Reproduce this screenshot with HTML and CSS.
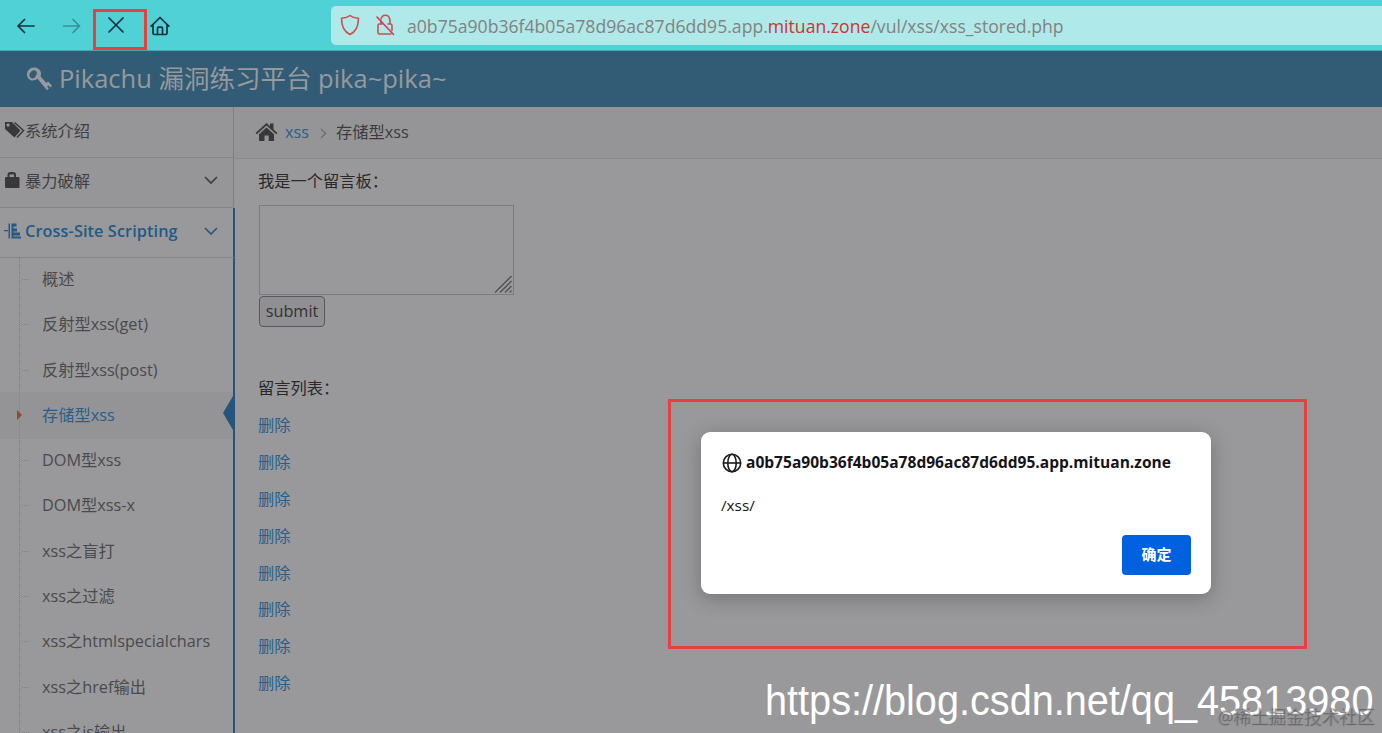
FILE: index.html
```html
<!DOCTYPE html>
<html lang="zh">
<head>
    <meta charset="UTF-8">
    <meta name="viewport" content="width=device-width, initial-scale=1.0">
    <title>Pikachu 漏洞练习平台</title>
    <link rel="stylesheet" href="styles.css">
</head>
<body>
    <div class="toolbar">
        <div class="nav-buttons">
            <svg class="back" width="20" height="20" viewBox="0 0 20 20"><path d="M18 10H2M8.500 3.500L2 10l6.500 6.500"/></svg>
            <svg class="forward" width="20" height="20" viewBox="0 0 20 20"><path d="M1.500 10h16M11 3.500l6.500 6.500-6.500 6.500"/></svg>
            <span class="stop"><svg width="20" height="20" viewBox="0 0 20 20"><path d="M3 3l14 14M17 3L3 17"/></svg></span>
            <svg class="home" width="20" height="20" viewBox="0 0 20 20"><path d="M1.200 10.200L10 1.500l8.800 8.700M3 9v8.200q0 1.300 1.300 1.300h11.400q1.300 0 1.300-1.300V9M7.500 18v-5.500q0-1.300 1.300-1.300h2.400q1.300 0 1.300 1.300V18"/></svg>
        </div>
        <div class="url-bar">
            <svg width="20" height="22" viewBox="0 0 20 22"><path d="M10 1.500C7.500 3.500 4.500 4 1.500 4.300C1.500 11 3.500 17.500 10 20.500C16.500 17.500 18.500 11 18.500 4.300C15.500 4 12.500 3.500 10 1.500Z"/></svg>
            <svg class="lock" width="20" height="22" viewBox="0 0 20 22"><path d="M6 5q1-3.800 4.500-3.800T15 6v4M6 7v3M13 10h2.500q1.500 0 1.500 1.500v5M16 20H4.500Q3 20 3 18.500v-7Q3 10 4.500 10H7"/><path class="slash" d="M2 3l16.500 17.500"/></svg>
            <span class="url">a0b75a90b36f4b05a78d96ac87d6dd95.app.<b>mituan.zone</b>/vul/xss/xss_stored.php</span>
        </div>
    </div>

    <header>
        <svg width="26" height="26" viewBox="0 0 26 26"><path fill-rule="evenodd" d="M8 1.500C4 1.500 1 4.500 1 8.500c0 3.500 2.500 6 5.500 6 2 0 3.700-.5 5-1.700L21 24.200l1.800-1.600-1.700-2 1.300-1.200 1.800 2 1.800-1.700-3.800-4.300-1.800 1.500-5.800-6.300c.3-1 .4-2 .4-3C15 4 12 1.500 8 1.500zM8.200 4.300a3 3 0 0 1 1.700 5.200A3.300 3.300 0 1 1 4.600 6.500 4 4 0 0 1 8.200 4.300z"/></svg>
        <span>Pikachu 漏洞练习平台 pika~pika~</span>
    </header>

    <div class="main">
        <nav class="sidebar">
            <a class="item first" href="#">
                <svg width="21" height="18" viewBox="0 0 21 18"><path fill-rule="evenodd" d="M1 1h7l8.500 8.500-6 7L1 8zM4 2.500a1.600 1.600 0 1 0 .1 0z"/><path class="stroke" d="M10.500 1.500l9 8-6.500 7"/></svg>
                <span>系统介绍</span>
            </a>
            <a class="item" href="#">
                <svg width="21" height="18" viewBox="0 0 21 18"><path fill-rule="evenodd" d="M1 7q0-1 1-1h1.500V4q0-3 3-3H9q3 0 3 3v2h2.500q1 0 1 1v9q0 1-1 1H2q-1 0-1-1zM5.500 6H10V3.500H5.500z"/></svg>
                <span>暴力破解</span>
                <svg class="arrow" width="14" height="10" viewBox="0 0 14 10"><path d="M1 2l6 6 6-6"/></svg>
            </a>
            <a class="item open" href="#">
                <svg width="21" height="18" viewBox="0 0 21 18"><path d="M0 8h4v1.300H0zM4.500 1.500H6v15H4.500zM7.500 1.500h5v3H9.500v2H13v3H9.500v1H16v3H9.500v1H17v2H7.500z"/></svg>
                <span>Cross-Site Scripting</span>
                <svg class="arrow" width="14" height="10" viewBox="0 0 14 10"><path d="M1 2l6 6 6-6"/></svg>
            </a>
            <ul class="submenu">
                <li>概述</li>
                <li>反射型xss(get)</li>
                <li>反射型xss(post)</li>
                <li class="active">存储型xss</li>
                <li>DOM型xss</li>
                <li>DOM型xss-x</li>
                <li>xss之盲打</li>
                <li>xss之过滤</li>
                <li>xss之htmlspecialchars</li>
                <li>xss之href输出</li>
                <li>xss之js输出</li>
            </ul>
        </nav>

        <div class="content">
            <div class="breadcrumb">
                <svg width="23" height="20" viewBox="0 0 23 20"><path d="M11.500 1L15 4.200V1.500h3.500v6L22.500 11l-1.300 1.300-9.700-8.700-9.700 8.700L.5 11z"/><path d="M11.500 5.500l7.500 6.800V19h-5.300v-5.500H9.500V19H4v-6.700z"/></svg>
                <a href="#">xss</a>
                <svg class="sep" width="7" height="11" viewBox="0 0 7 11"><path d="M1 1l4.500 4.500L1 10"/></svg>
                <span>存储型xss</span>
            </div>
            <div class="board">
                <p class="label">我是一个留言板：</p>
                <div class="textarea">
                    <svg width="18" height="18" viewBox="0 0 18 18"><path d="M1 17.500L17.500 1M6 17.500L17.500 6M11 17.500l6.500-6.500M15.500 17.500l2-2"/></svg>
                </div>
                <button class="submit">submit</button>
                <p class="label list-title">留言列表：</p>
                <div class="messages">
                    <a href="#">删除</a>
                    <a href="#">删除</a>
                    <a href="#">删除</a>
                    <a href="#">删除</a>
                    <a href="#">删除</a>
                    <a href="#">删除</a>
                    <a href="#">删除</a>
                    <a href="#">删除</a>
                </div>
            </div>
        </div>
    </div>

    <!-- alert dialog -->
    <div class="highlight">
        <div class="dialog">
            <div class="dialog-title">
                <svg width="20" height="20" viewBox="0 0 20 20"><circle cx="10" cy="10" r="8.700"/><ellipse cx="10" cy="10" rx="4.200" ry="8.700"/><path d="M1.300 10h17.400"/></svg>
                <span>a0b75a90b36f4b05a78d96ac87d6dd95.app.mituan.zone</span>
            </div>
            <p>/xss/</p>
            <button>确定</button>
        </div>
    </div>

    <div class="blog-url">https://blog.csdn.net/qq_45813980</div>
    <div class="community">@稀土掘金技术社区</div>
</body>
</html>
```
FILE: styles.css
```css
* {
    box-sizing: border-box;
}
body {
    margin: 0;
    height: 733px;
    overflow: hidden;
    position: relative;
    font-family: "Open Sans", "Noto Sans CJK SC", sans-serif;
    font-size: 16.25px;
    color: #3b3b3e;
    background-color: #99999b;
}
a {
    color: #285f8a;
    text-decoration: none;
}
svg {
    flex: none;
}

/* browser bar */
.toolbar {
    height: 51px;
    display: flex;
    align-items: center;
    background-color: #50d1d5;
    border-bottom: 1px solid #4ba5b1;
}
.nav-buttons {
    width: 331px;
    flex: none;
    display: flex;
    align-items: center;
    padding: 1px 0 0 16px;
}
.nav-buttons svg {
    fill: none;
    stroke: #14303f;
    stroke-width: 1.7;
    stroke-linecap: round;
    stroke-linejoin: round;
}
.nav-buttons .forward {
    margin-left: 26px;
    opacity: 0.4;
}
.stop {
    width: 54px;
    height: 41px;
    margin: 7px 3px 0 11px;
    padding: 7px 0 0 10px;
    border: 3px solid #e8403f;
}
.stop svg {
    display: block;
    margin-top: -4px;
}
.url-bar {
    flex: 1;
    height: 39px;
    display: flex;
    align-items: center;
    padding-left: 9px;
    background-color: #afe9ea;
    border-radius: 5px 0 0 5px;
}
.url-bar svg {
    fill: none;
    stroke: #c8524a;
    stroke-width: 1.6;
    stroke-linecap: round;
    stroke-linejoin: round;
}
.url-bar .lock {
    margin-left: 15px;
}
.url-bar .slash {
    stroke: #e03358;
}
.url {
    margin-left: 12px;
    font-size: 17.62px;
    line-height: 24px;
    padding-top: 1px;
    color: #85827f;
    white-space: nowrap;
}
.url b {
    font-weight: normal;
    color: #d0342a;
}

header {
    height: 56px;
    display: flex;
    align-items: center;
    padding-left: 26px;
    gap: 8px;
    font-size: 25.5px;
    color: #97999c;
    background-color: #325c76;
}
header svg {
    fill: #97999c;
}
header span {
    margin: -5px 0 0 -1px;
    white-space: nowrap;
}

.main {
    height: 626px;
    display: flex;
}

/* left menu */
.sidebar {
    width: 235px;
    flex: none;
    background: linear-gradient(#7f7f82, #7f7f82) 233px 0 / 1px 100px no-repeat #969698;
    overflow: hidden;
}
.item {
    height: 50px;
    margin-right: 2px;
    display: flex;
    align-items: center;
    padding: 0 15px 5px 4px;
    color: #3f3f42;
    border-bottom: 1px solid #858587;
}
.item.first {
    height: 51px;
    padding-bottom: 4px;
}
.item svg {
    fill: #38383a;
}
.item .stroke {
    fill: none;
    stroke: #38383a;
    stroke-width: 1.5;
}
.item .arrow {
    margin-left: auto;
    fill: none;
    stroke: #3f3f42;
    stroke-width: 1.7;
}
.item.open {
    margin-right: 0;
    padding-bottom: 4px;
    font-weight: 600;
    letter-spacing: 0.1px;
    color: #235985;
    background-color: #99999b;
    border-right: 2px solid #25557d;
}
.item.open svg {
    fill: #235985;
}
.item.open .arrow {
    fill: none;
    stroke: #235985;
}
.submenu {
    height: 476px;
    margin: 0;
    padding: 0;
    list-style: none;
    background: repeating-linear-gradient(#7b7b7e 0 1px, transparent 1px 2px) 19px 0 / 1px 100% no-repeat #99999b;
    border-right: 2px solid #25557d;
}
.submenu li {
    position: relative;
    height: 45.3px;
    padding-left: 42px;
    line-height: 42.6px;
    color: #4a4a4d;
    white-space: nowrap;
}
.submenu li::before {
    content: "";
    position: absolute;
    left: 22px;
    top: 21px;
    width: 7px;
    border-top: 1px dotted #808083;
}
.submenu li.active {
    color: #285f8a;
    background-color: rgba(140, 140, 146, 0.4);
    box-shadow: 0 -2px rgba(140, 140, 146, 0.4);
}
.submenu li.active::before {
    left: 17px;
    top: 16px;
    width: 0;
    border: solid transparent;
    border-width: 5px 0 5px 5px;
    border-left-color: #94492c;
}
.submenu li.active::after {
    content: "";
    position: absolute;
    right: 0;
    top: 2px;
    border: solid transparent;
    border-width: 17px 10px 17px 0;
    border-right-color: #25557d;
}

/* page content */
.content {
    flex: 1;
}
.breadcrumb {
    height: 52px;
    display: flex;
    align-items: center;
    padding: 0 0 2px 20px;
    background-color: #959597;
    border-bottom: 1px solid #87878a;
}
.breadcrumb svg {
    fill: #38383a;
}
.breadcrumb a {
    margin-left: 7px;
}
.breadcrumb span {
    margin-top: -1px;
}
.breadcrumb .sep {
    margin: 3px 9px 0 11px;
    fill: none;
    stroke: #6d6d70;
    stroke-width: 1.4;
}
.board {
    padding: 10px 0 0 24px;
    display: flex;
    flex-direction: column;
    align-items: flex-start;
}
.label {
    margin: 0 0 0 -1px;
    height: 24px;
    line-height: 24px;
    color: #29292b;
}
.textarea {
    width: 255px;
    height: 90px;
    margin-top: 12px;
    display: flex;
    justify-content: flex-end;
    align-items: flex-end;
    padding: 0 1px 1px 0;
    border: 1px solid #7c7c7f;
}
.textarea svg {
    stroke: #515154;
    stroke-width: 1.3;
}
.submit {
    width: 66px;
    height: 31px;
    margin-top: 1px;
    padding: 0 0 2px;
    font: inherit;
    color: #333335;
    background-color: #8f8f94;
    border: 1px solid #59595c;
    border-radius: 4px;
}
.list-title {
    margin-top: 49px;
}
.messages {
    margin: 7px 0 0 -1px;
    display: flex;
    flex-direction: column;
}
.messages a {
    height: 36.9px;
    line-height: 36px;
}

/* dialog */
.highlight {
    position: absolute;
    left: 668px;
    top: 399px;
    width: 639px;
    height: 250px;
    padding: 30px;
    border: 3px solid #e8403f;
}
.dialog {
    width: 510px;
    height: 162px;
    display: flex;
    flex-direction: column;
    padding: 20px;
    font-size: 15.3px;
    color: #15141a;
    background-color: #fff;
    border-radius: 9px;
    box-shadow: 0 4px 20px rgba(30, 30, 35, 0.3);
}
.dialog-title {
    height: 22px;
    display: flex;
    align-items: center;
    gap: 4px;
    font-size: 15.55px;
    font-weight: bold;
    white-space: nowrap;
}
.dialog-title span {
    margin-top: -2px;
}
.dialog-title svg {
    margin-left: 1px;
    fill: none;
    stroke: #1c1b20;
    stroke-width: 1.6;
}
.dialog p {
    margin: 20px 0 0;
    line-height: 22px;
}
.dialog button {
    width: 69px;
    height: 40px;
    margin-top: auto;
    margin-bottom: -1px;
    align-self: flex-end;
    padding: 0 0 3px;
    font-family: inherit;
    font-size: 15px;
    font-weight: bold;
    color: #fff;
    background-color: #0061e0;
    border: none;
    border-radius: 4px;
}

.blog-url {
    position: absolute;
    left: 765px;
    top: 677px;
    font-family: "Liberation Sans", sans-serif;
    font-size: 42px;
    line-height: 48px;
    color: #fff;
    white-space: nowrap;
    transform: scaleX(0.944);
    transform-origin: left;
}
.community {
    position: absolute;
    right: 8px;
    bottom: 4px;
    font-size: 17.7px;
    line-height: 26px;
    color: rgba(160, 160, 162, 0.4);
    text-shadow: 1px 1px 1px rgba(80, 80, 83, 0.8);
    white-space: nowrap;
}
```
